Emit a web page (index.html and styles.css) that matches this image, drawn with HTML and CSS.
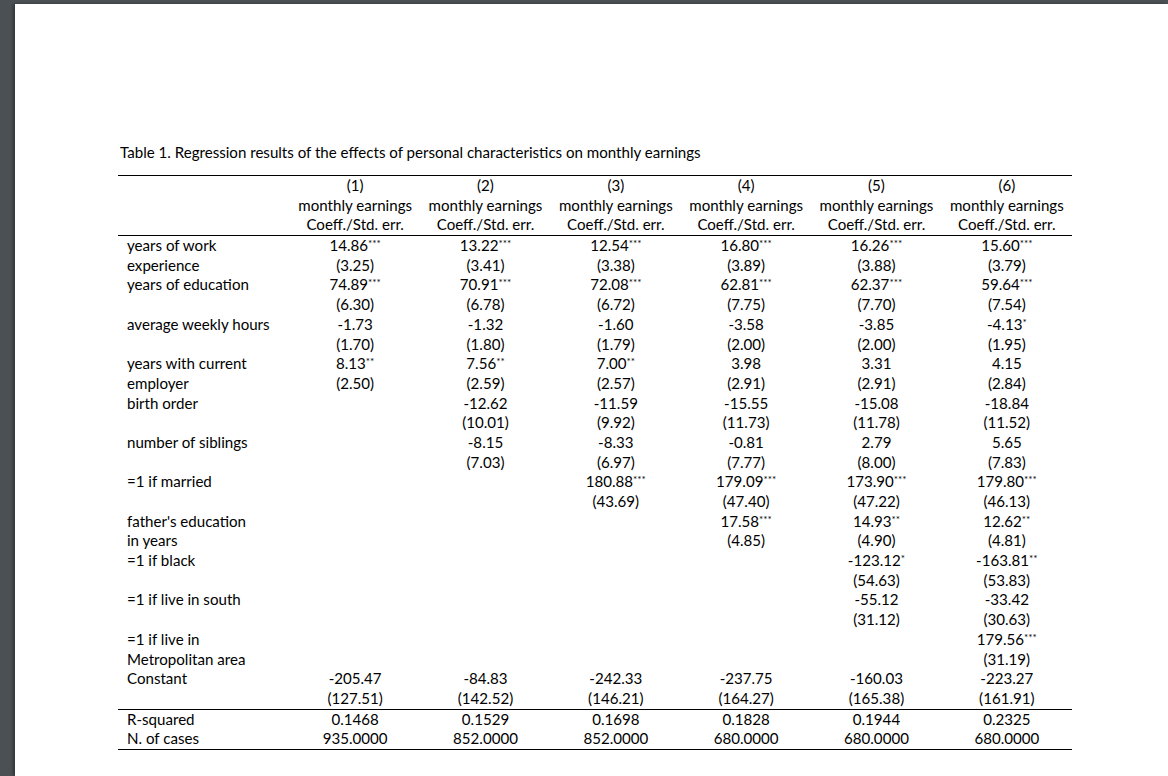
FILE: index.html
```html
<!DOCTYPE html>
<html>
<head>
<meta charset="utf-8">
<link rel="stylesheet" href="styles.css">
</head>
<body>
<div class="page">
  <div class="title">Table 1. Regression results of the effects of personal characteristics on monthly earnings</div>
  <table class="reg">
    <colgroup>
      <col class="c-label"><col class="c-num"><col class="c-num"><col class="c-num"><col class="c-num"><col class="c-num"><col class="c-num">
    </colgroup>
    <thead>
      <tr class="top"><td></td><td>(1)</td><td>(2)</td><td>(3)</td><td>(4)</td><td>(5)</td><td>(6)</td></tr>
      <tr><td></td><td>monthly earnings</td><td>monthly earnings</td><td>monthly earnings</td><td>monthly earnings</td><td>monthly earnings</td><td>monthly earnings</td></tr>
      <tr class="hend"><td></td><td>Coeff./Std. err.</td><td>Coeff./Std. err.</td><td>Coeff./Std. err.</td><td>Coeff./Std. err.</td><td>Coeff./Std. err.</td><td>Coeff./Std. err.</td></tr>
    </thead>
    <tbody>
      <tr><td>years of work</td><td>14.86<sup>***</sup></td><td>13.22<sup>***</sup></td><td>12.54<sup>***</sup></td><td>16.80<sup>***</sup></td><td>16.26<sup>***</sup></td><td>15.60<sup>***</sup></td></tr>
      <tr><td>experience</td><td>(3.25)</td><td>(3.41)</td><td>(3.38)</td><td>(3.89)</td><td>(3.88)</td><td>(3.79)</td></tr>
      <tr><td>years of education</td><td>74.89<sup>***</sup></td><td>70.91<sup>***</sup></td><td>72.08<sup>***</sup></td><td>62.81<sup>***</sup></td><td>62.37<sup>***</sup></td><td>59.64<sup>***</sup></td></tr>
      <tr><td></td><td>(6.30)</td><td>(6.78)</td><td>(6.72)</td><td>(7.75)</td><td>(7.70)</td><td>(7.54)</td></tr>
      <tr><td>average weekly hours</td><td>-1.73</td><td>-1.32</td><td>-1.60</td><td>-3.58</td><td>-3.85</td><td>-4.13<sup>*</sup></td></tr>
      <tr><td></td><td>(1.70)</td><td>(1.80)</td><td>(1.79)</td><td>(2.00)</td><td>(2.00)</td><td>(1.95)</td></tr>
      <tr><td>years with current</td><td>8.13<sup>**</sup></td><td>7.56<sup>**</sup></td><td>7.00<sup>**</sup></td><td>3.98</td><td>3.31</td><td>4.15</td></tr>
      <tr><td>employer</td><td>(2.50)</td><td>(2.59)</td><td>(2.57)</td><td>(2.91)</td><td>(2.91)</td><td>(2.84)</td></tr>
      <tr><td>birth order</td><td></td><td>-12.62</td><td>-11.59</td><td>-15.55</td><td>-15.08</td><td>-18.84</td></tr>
      <tr><td></td><td></td><td>(10.01)</td><td>(9.92)</td><td>(11.73)</td><td>(11.78)</td><td>(11.52)</td></tr>
      <tr><td>number of siblings</td><td></td><td>-8.15</td><td>-8.33</td><td>-0.81</td><td>2.79</td><td>5.65</td></tr>
      <tr><td></td><td></td><td>(7.03)</td><td>(6.97)</td><td>(7.77)</td><td>(8.00)</td><td>(7.83)</td></tr>
      <tr><td>=1 if married</td><td></td><td></td><td>180.88<sup>***</sup></td><td>179.09<sup>***</sup></td><td>173.90<sup>***</sup></td><td>179.80<sup>***</sup></td></tr>
      <tr><td></td><td></td><td></td><td>(43.69)</td><td>(47.40)</td><td>(47.22)</td><td>(46.13)</td></tr>
      <tr><td>father's education</td><td></td><td></td><td></td><td>17.58<sup>***</sup></td><td>14.93<sup>**</sup></td><td>12.62<sup>**</sup></td></tr>
      <tr><td>in years</td><td></td><td></td><td></td><td>(4.85)</td><td>(4.90)</td><td>(4.81)</td></tr>
      <tr><td>=1 if black</td><td></td><td></td><td></td><td></td><td>-123.12<sup>*</sup></td><td>-163.81<sup>**</sup></td></tr>
      <tr><td></td><td></td><td></td><td></td><td></td><td>(54.63)</td><td>(53.83)</td></tr>
      <tr><td>=1 if live in south</td><td></td><td></td><td></td><td></td><td>-55.12</td><td>-33.42</td></tr>
      <tr><td></td><td></td><td></td><td></td><td></td><td>(31.12)</td><td>(30.63)</td></tr>
      <tr><td>=1 if live in</td><td></td><td></td><td></td><td></td><td></td><td>179.56<sup>***</sup></td></tr>
      <tr><td>Metropolitan area</td><td></td><td></td><td></td><td></td><td></td><td>(31.19)</td></tr>
      <tr><td>Constant</td><td>-205.47</td><td>-84.83</td><td>-242.33</td><td>-237.75</td><td>-160.03</td><td>-223.27</td></tr>
      <tr class="bend"><td></td><td>(127.51)</td><td>(142.52)</td><td>(146.21)</td><td>(164.27)</td><td>(165.38)</td><td>(161.91)</td></tr>
      <tr><td>R-squared</td><td>0.1468</td><td>0.1529</td><td>0.1698</td><td>0.1828</td><td>0.1944</td><td>0.2325</td></tr>
      <tr class="last"><td>N. of cases</td><td>935.0000</td><td>852.0000</td><td>852.0000</td><td>680.0000</td><td>680.0000</td><td>680.0000</td></tr>
    </tbody>
  </table>
</div>
</body>
</html>
```

FILE: styles.css
```css
html, body {
  margin: 0;
  padding: 0;
}
body {
  background: #4b5054;
  height: 776px;
  overflow: hidden;
}
.page {
  margin-left: 15px;
  margin-top: 4px;
  height: 772px;
  background: #ffffff;
  box-shadow: -2px 0 3px rgba(0,0,0,0.35);
  padding-top: 138px;
  box-sizing: border-box;
  font-family: "Lato", "Liberation Sans", sans-serif;
  font-size: 15.1px;
  color: #000;
}
.title {
  margin-left: 105px;
  line-height: 20px;
  height: 20px;
}
.reg {
  margin-left: 103px;
  margin-top: 13px;
  border-collapse: collapse;
  table-layout: fixed;
  width: 954px;
}
.c-label { width: 172px; }
.c-num { width: 130.33px; }
.reg td {
  padding: 0;
  height: 19.68px;
  line-height: 19.68px;
  text-align: center;
  white-space: nowrap;
}
.reg td:first-child {
  text-align: left;
  padding-left: 9px;
}
.reg tr.top td { border-top: 1px solid #000; }
.reg tr.hend td { border-bottom: 1px solid #000; }
.reg tr.bend td { border-bottom: 1px solid #000; }
.reg tr.last td { border-bottom: 1px solid #000; }
.reg sup {
  font-size: 10px;
  line-height: 0;
  vertical-align: 4px;
}
```
